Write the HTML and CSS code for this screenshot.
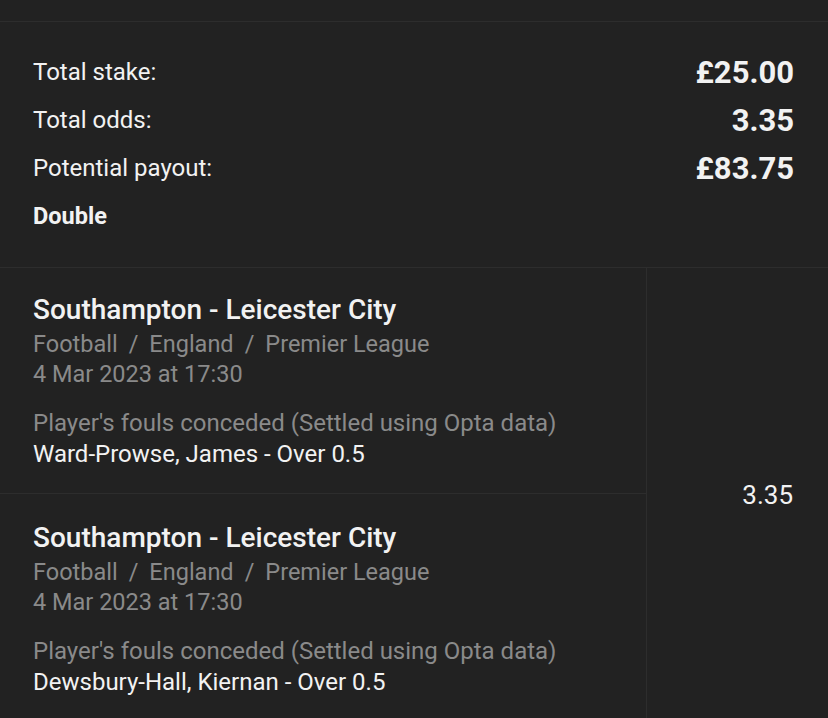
FILE: index.html
```html
<!DOCTYPE html>
<html>
<head>
<meta charset="utf-8">
<link rel="stylesheet" href="styles.css">
</head>
<body>
<div class="page">
  <div class="top-gap"></div>
  <section class="summary">
    <div class="row"><span class="label">Total stake:</span><span class="value">£25.00</span></div>
    <div class="row"><span class="label">Total odds:</span><span class="value">3.35</span></div>
    <div class="row"><span class="label">Potential payout:</span><span class="value">£83.75</span></div>
    <div class="row"><span class="type">Double</span></div>
  </section>
  <section class="legs">
    <div class="leg-list">
      <div class="leg">
        <div class="title">Southampton - Leicester City</div>
        <div class="meta">Football<span class="sep">/</span>England<span class="sep">/</span>Premier League</div>
        <div class="meta">4 Mar 2023 at 17:30</div>
        <div class="market">Player's fouls conceded (Settled using Opta data)</div>
        <div class="selection">Ward-Prowse, James - Over 0.5</div>
      </div>
      <div class="leg">
        <div class="title">Southampton - Leicester City</div>
        <div class="meta">Football<span class="sep">/</span>England<span class="sep">/</span>Premier League</div>
        <div class="meta">4 Mar 2023 at 17:30</div>
        <div class="market">Player's fouls conceded (Settled using Opta data)</div>
        <div class="selection">Dewsbury-Hall, Kiernan - Over 0.5</div>
      </div>
    </div>
    <div class="odds">3.35</div>
  </section>
</div>
</body>
</html>
```
FILE: styles.css
```css
html, body {
  margin: 0;
  padding: 0;
  background: #222222;
}
body {
  font-family: Roboto, "Noto Sans", sans-serif;
  color: #f2f2f2;
  height: 718px;
  overflow: hidden;
}
.top-gap {
  height: 21px;
  border-bottom: 1px solid #2d2d2d;
}
.summary {
  padding: 26px 34px 27px 33px;
  border-bottom: 1px solid #2d2d2d;
}
.row {
  height: 48px;
  display: flex;
  align-items: center;
  justify-content: space-between;
}
.label {
  font-size: 24px;
}
.value {
  font-size: 31px;
  font-weight: 700;
}
.type {
  font-size: 23.5px;
  font-weight: 700;
}
.legs {
  display: grid;
  grid-template-columns: 646px 1fr;
}
.leg {
  padding: 27px 20px 24px 33px;
}
.leg + .leg {
  border-top: 1px solid #2d2d2d;
  padding-top: 29px;
}
.title {
  font-size: 28px;
  font-weight: 500;
  line-height: 30px;
  margin-bottom: 4px;
}
.meta {
  font-size: 23.5px;
  line-height: 30px;
  color: #8a8a8a;
}
.sep {
  margin: 0 11px;
}
.market {
  font-size: 24px;
  line-height: 30px;
  color: #8a8a8a;
  margin-top: 19px;
}
.selection {
  font-size: 24px;
  line-height: 30px;
  color: #f2f2f2;
  margin-top: 1px;
}
.odds {
  border-left: 1px solid #2d2d2d;
  display: flex;
  align-items: center;
  justify-content: flex-end;
  padding-right: 35px;
  font-size: 26px;
}
```
